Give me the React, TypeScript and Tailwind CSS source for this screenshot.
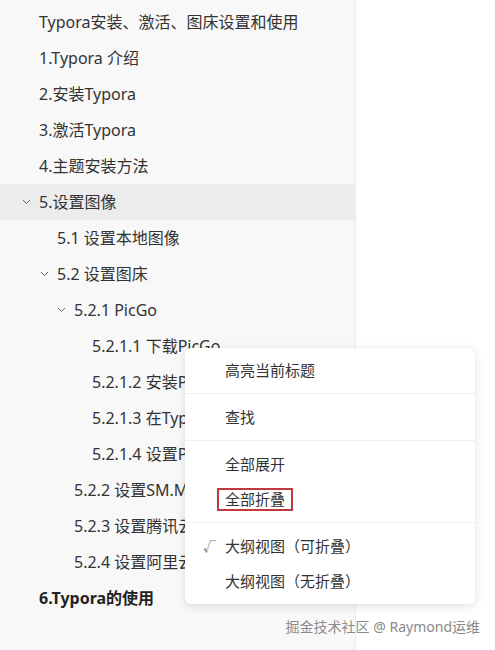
import React from "react";

type Heading = {
  text: string;
  level: number;
  open?: boolean;
  active?: boolean;
  bold?: boolean;
};

const headings: Heading[] = [
  { text: "Typora安装、激活、图床设置和使用", level: 1 },
  { text: "1.Typora 介绍", level: 1 },
  { text: "2.安装Typora", level: 1 },
  { text: "3.激活Typora", level: 1 },
  { text: "4.主题安装方法", level: 1 },
  { text: "5.设置图像", level: 1, open: true, active: true },
  { text: "5.1 设置本地图像", level: 2 },
  { text: "5.2 设置图床", level: 2, open: true },
  { text: "5.2.1 PicGo", level: 3, open: true },
  { text: "5.2.1.1 下载PicGo", level: 4 },
  { text: "5.2.1.2 安装PicGo", level: 4 },
  { text: "5.2.1.3 在Typora中设置", level: 4 },
  { text: "5.2.1.4 设置PicGo", level: 4 },
  { text: "5.2.2 设置SM.MS图床", level: 3 },
  { text: "5.2.3 设置腾讯云图床", level: 3 },
  { text: "5.2.4 设置阿里云图床", level: 3 },
  { text: "6.Typora的使用", level: 1, bold: true },
];

// indentation of the text per level
const indent: Record<number, string> = {
  1: "pl-[39px]",
  2: "pl-[57px]",
  3: "pl-[74px]",
  4: "pl-[92px]",
};

const Chevron = () => (
  <svg
    width="9"
    height="6"
    viewBox="0 0 9 6"
    className="absolute -left-[17px] top-1/2 -translate-y-1/2"
  >
    <polyline points="1,1 4.5,4.5 8,1" fill="none" stroke="#666" strokeWidth="1" />
  </svg>
);

const OutlineRow = ({ h }: { h: Heading }) => (
  <div
    className={`h-9 flex items-center ${indent[h.level]} ${h.active ? "bg-[#ececec]" : ""}`}
  >
    <span
      className={`relative whitespace-nowrap text-[16px] leading-none ${h.bold ? "font-bold text-[#222]" : "text-[#333]"}`}
    >
      {h.open && <Chevron />}
      {h.text}
    </span>
  </div>
);

const MenuItem = ({ children, check }: { children: React.ReactNode; check?: boolean }) => (
  <div className="h-[35px] flex items-center text-[15px] text-[#333]">
    <span className="w-10 pl-[18px] text-[13px] text-[#666]">{check ? "√" : ""}</span>
    {children}
  </div>
);

const Sep = () => <div className="h-px bg-[#eeeeee] mt-[5px] mb-[6px]" />;

export default function App() {
  return (
    <div
      className="relative w-[495px] h-[650px] overflow-hidden bg-white flex"
      style={{ fontFamily: '"Noto Sans", "Noto Sans CJK SC", sans-serif' }}
    >
      <div className="w-[356px] h-full bg-[#f8f8f8] border-r border-[#ebebeb] pt-1">
        {headings.map((h, i) => (
          <OutlineRow key={i} h={h} />
        ))}
      </div>
      <div className="flex-1" />

      {/* context menu */}
      <div className="absolute left-[185px] top-[348px] w-[290px] bg-white rounded-md py-[5px] shadow-[0_2px_10px_rgba(0,0,0,0.13)]">
        <MenuItem>高亮当前标题</MenuItem>
        <Sep />
        <MenuItem>查找</MenuItem>
        <Sep />
        <MenuItem>全部展开</MenuItem>
        <MenuItem>
          <span className="-ml-[8px] px-[6px] h-[23px] flex items-center border-2 border-[#c0393b]">
            全部折叠
          </span>
        </MenuItem>
        <Sep />
        <MenuItem check>大纲视图（可折叠）</MenuItem>
        <MenuItem>大纲视图（无折叠）</MenuItem>
      </div>

      <div className="absolute right-[15px] top-[616px] text-[14px] text-[#8a8a8a] whitespace-nowrap [text-shadow:0_0_2px_#fff]">
        掘金技术社区 @ Raymond运维
      </div>
    </div>
  );
}
